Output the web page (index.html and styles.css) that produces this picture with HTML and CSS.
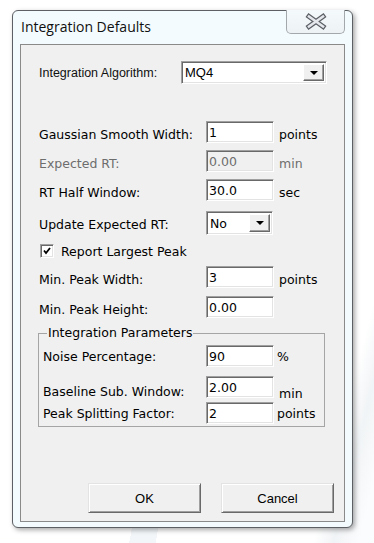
FILE: index.html
```html
<html>
<head>
	<title>Integration Defaults</title>
	<meta name="viewport" content="initial-scale=1, maximum-scale=1">
	<link rel="stylesheet" href="styles.css">
</head>
<body>
	<div class="window">
		<div class="titlebar">
			<span class="title">Integration Defaults</span>
			<div class="close">
				<svg width="22" height="17" viewBox="0 0 22 17">
					<path d="M4 3.5 L18 13.5 M18 3.5 L4 13.5" stroke="#5b5f66" stroke-width="5" stroke-linecap="square" fill="none"/>
					<path d="M4 3.5 L18 13.5 M18 3.5 L4 13.5" stroke="#e4e7eb" stroke-width="2.6" stroke-linecap="square" fill="none"/>
				</svg>
			</div>
		</div>
		<section class="panel">
			<div class="algo">
				<span class="algo-label">Integration Algorithm:</span>
				<div class="combo wide"><span class="combo-text">MQ4</span><span class="drop"><i class="arrow"></i></span></div>
			</div>

			<div class="row first">
				<label>Gaussian Smooth Width:</label><input class="edit" value="1"><span class="unit">points</span>
			</div>
			<div class="row disabled">
				<label>Expected RT:</label><input class="edit" value="0.00" disabled><span class="unit">min</span>
			</div>
			<div class="row">
				<label>RT Half Window:</label><input class="edit" value="30.0"><span class="unit">sec</span>
			</div>
			<div class="row gap8">
				<label>Update Expected RT:</label>
				<div class="combo small"><span class="combo-text">No</span><span class="drop"><i class="arrow"></i></span></div>
			</div>
			<div class="check-row">
				<span class="checkbox">
					<svg width="10" height="10" viewBox="0 0 10 10"><path d="M2 4.5 L4 7 L8 2" stroke="#000" stroke-width="1.8" fill="none"/></svg>
				</span>
				<span>Report Largest Peak</span>
			</div>
			<div class="row gap8">
				<label>Min. Peak Width:</label><input class="edit" value="3"><span class="unit">points</span>
			</div>
			<div class="row gap8">
				<label>Min. Peak Height:</label><input class="edit" value="0.00">
			</div>

			<fieldset class="group">
				<legend>Integration Parameters</legend>
				<div class="row inner top">
					<label>Noise Percentage:</label><input class="edit" value="90"><span class="unit pct">%</span>
				</div>
				<div class="row inner gap6">
					<label class="low">Baseline Sub. Window:</label><input class="edit" value="2.00"><span class="unit lower">min</span>
				</div>
				<div class="row inner">
					<label>Peak Splitting Factor:</label><input class="edit" value="2"><span class="unit pct">points</span>
				</div>
			</fieldset>

			<div class="buttons">
				<button>OK</button>
				<button>Cancel</button>
			</div>
		</section>
	</div>
</body>
</html>
```

FILE: styles.css
```css
		body {
			margin: 0;
			width: 374px;
			height: 543px;
			overflow: hidden;
			background:
				linear-gradient(100deg, transparent 0%, transparent 35%, #f2f6f8 35%, #f2f6f8 42%, transparent 42%) 0 528px / 374px 15px no-repeat,
				linear-gradient(104deg, #ffffff 0%, #ffffff 88%, #f1f4f6 92%, #fbfcfd 97%);
			font-family: "DejaVu Sans", sans-serif;
			font-size: 12.5px;
			color: #000;
		}
		.window {
			margin: 10px 0 0 12px;
			width: 341px;
			height: 518px;
			box-sizing: border-box;
			border: 1px solid #5c5f63;
			border-radius: 6px;
			background: #f3fbfe;
			box-shadow: 2px 2px 5px rgba(0, 0, 0, 0.35);
			display: flex;
			flex-direction: column;
		}
		.titlebar {
			height: 33px;
			display: flex;
			justify-content: space-between;
			align-items: flex-start;
		}
		.title {
			font-family: "Open Sans", sans-serif;
			font-size: 14px;
			line-height: 18px;
			margin: 7px 0 0 8px;
			color: #101010;
		}
		.close {
			margin: -1px 7px 0 0;
			width: 59px;
			height: 24px;
			box-sizing: border-box;
			border: 1px solid #a3a8ad;
			border-top: none;
			border-radius: 0 0 5px 5px;
			background: linear-gradient(#f4f9fb, #edf2f5);
			display: flex;
			align-items: center;
			justify-content: center;
		}
		.panel {
			margin: 0 7px 5px 7px;
			height: 478px;
			box-sizing: border-box;
			border: 1px solid #8a8a8a;
			background: #f0f0f0;
			display: flex;
			flex-direction: column;
		}
		.algo {
			margin-top: 16px;
			padding-left: 18px;
			display: flex;
			align-items: center;
			height: 23px;
		}
		.algo-label {
			width: 142px;
			font-family: "Liberation Sans", Arial, sans-serif;
			font-size: 12.5px;
			color: #111;
		}
		.combo {
			box-sizing: border-box;
			background: #fff;
			border: 1px solid;
			border-color: #a0a0a0 #fff #fff #a0a0a0;
			box-shadow: inset 1px 1px 0 #696969, inset -1px -1px 0 #e3e3e3;
			display: flex;
			align-items: center;
			justify-content: space-between;
			padding: 2px;
		}
		.combo.wide {
			width: 146px;
			height: 23px;
		}
		.combo.small {
			width: 67px;
			height: 24px;
		}
		.combo-text {
			font-family: "Liberation Sans", Arial, sans-serif;
			font-size: 13px;
			padding-left: 1px;
			color: #000;
		}
		.combo.small .combo-text {
			font-family: "DejaVu Sans", sans-serif;
			font-size: 12.5px;
		}
		.drop {
			width: 21px;
			height: 100%;
			box-sizing: border-box;
			background: #f0f0f0;
			border: 1px solid;
			border-color: #fff #696969 #696969 #fff;
			box-shadow: inset -1px -1px 0 #a0a0a0;
			display: flex;
			align-items: center;
			justify-content: center;
		}
		.arrow {
			width: 0;
			height: 0;
			border-left: 4px solid transparent;
			border-right: 4px solid transparent;
			border-top: 4px solid #000;
		}
		.row {
			margin-top: 7px;
			padding-left: 18px;
			height: 22px;
			display: grid;
			grid-template-columns: 167px 68px auto;
			align-items: center;
		}
		.row label, .row .unit {
			margin-top: 4px;
		}
		.row.first {
			margin-top: 37px;
		}
		.row.gap8 {
			margin-top: 8px;
		}
		.row.gap8 .combo {
			margin-top: 2px;
		}
		.edit {
			box-sizing: border-box;
			width: 68px;
			height: 22px;
			margin: 0;
			padding: 0 2px;
			font-family: "DejaVu Sans", sans-serif;
			font-size: 12.5px;
			color: #000;
			background: #fff;
			border: 1px solid;
			border-color: #a0a0a0 #fff #fff #a0a0a0;
			box-shadow: inset 1px 1px 0 #696969, inset -1px -1px 0 #e3e3e3;
			outline: none;
		}
		.edit:disabled {
			background: #f0f0f0;
			color: #6d6d6d;
		}
		.unit {
			padding-left: 5px;
		}
		.unit.pct {
			padding-left: 3px;
		}
		.disabled label, .disabled .unit {
			color: #6d6d6d;
		}
		.check-row {
			margin-top: 13px;
			padding-left: 19px;
			height: 14px;
			display: flex;
			align-items: center;
		}
		.checkbox {
			width: 14px;
			height: 14px;
			box-sizing: border-box;
			background: #fff;
			border: 1px solid;
			border-color: #a0a0a0 #fff #fff #a0a0a0;
			box-shadow: inset 1px 1px 0 #696969, inset -1px -1px 0 #e3e3e3;
			display: flex;
			align-items: center;
			justify-content: center;
			margin-right: 7px;
		}
		.group {
			margin: 8px 0 0 17px;
			width: 287px;
			box-sizing: border-box;
			padding: 0 0 2px 4px;
			border: 1px solid #a5a5a5;
			min-width: 0;
		}
		.group legend {
			margin-left: 4px;
			padding: 0 1px;
			line-height: 14px;
		}
		.row.inner {
			padding-left: 0;
			grid-template-columns: 163px 68px auto;
			margin-top: 7px;
		}
		.row.inner label, .row.inner .unit {
			margin-top: 0;
		}
		.row.inner label.low {
			margin-top: 8px;
		}
		.row.inner .unit.lower {
			margin-top: 13px;
		}
		.row.inner.top {
			margin-top: 5px;
		}
		.row.inner.gap6 {
			margin-top: 6px;
		}
		.buttons {
			margin-top: auto;
			margin-bottom: 8px;
			padding-right: 10px;
			display: flex;
			justify-content: flex-end;
			gap: 20px;
		}
		.buttons button {
			width: 113px;
			height: 30px;
			box-sizing: border-box;
			font-family: "Liberation Sans", Arial, sans-serif;
			font-size: 13px;
			color: #000;
			background: #f0f0f0;
			border: 1px solid;
			border-color: #e3e3e3 #696969 #696969 #e3e3e3;
			box-shadow: inset 1px 1px 0 #fff, inset -1px -1px 0 #a0a0a0;
		}
```
